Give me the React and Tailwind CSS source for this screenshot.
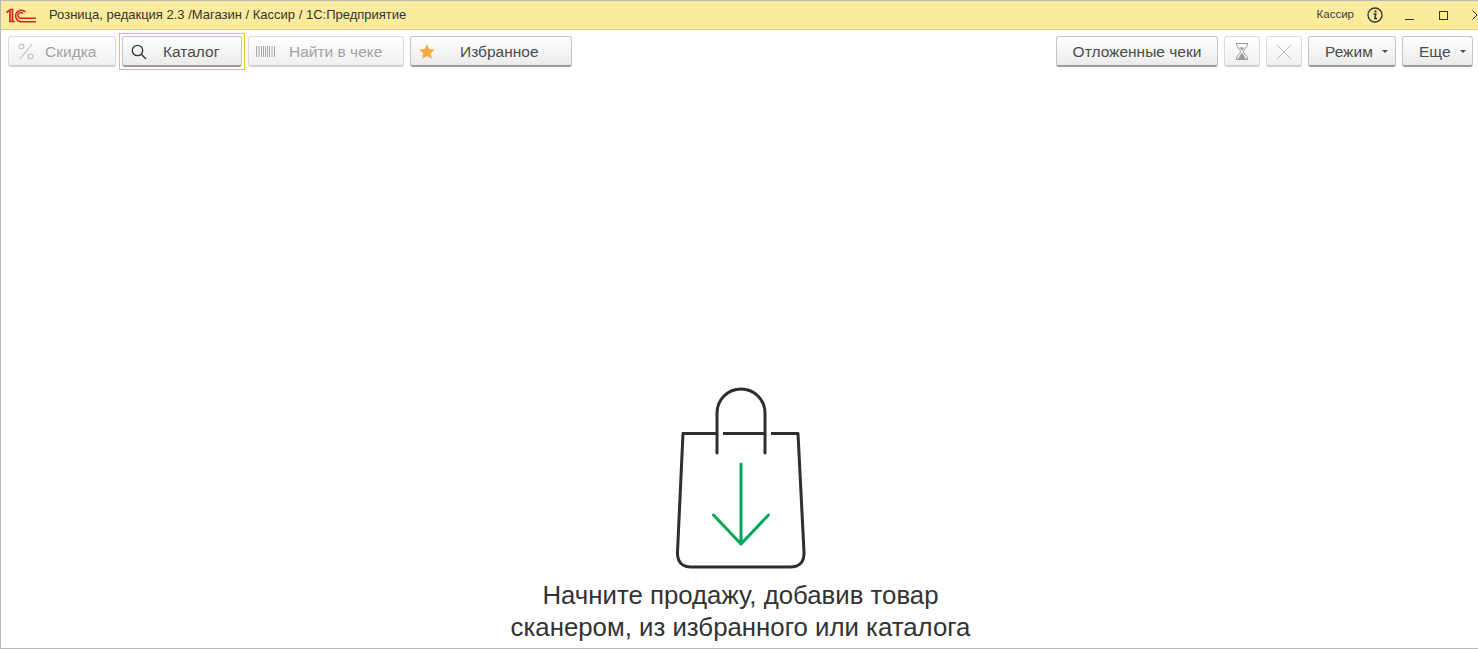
import React from "react";

const base = "h-[31px] flex items-center rounded-[3px] text-[15.500px] leading-none whitespace-nowrap pt-[1px]";
const on = "bg-gradient-to-b from-white to-[#ebebeb] border border-[#c4c4c4] border-b-[#9c9c9c] border-b-2 text-[#4b4b4b]";
const off = "bg-gradient-to-b from-white to-[#f0f0f0] border border-[#dcdcdc] border-b-[#cfcfcf] border-b-2 text-[#a2a2a2]";

function Btn({ w, disabled, children, className = "" }) {
  return <div className={`${base} ${disabled ? off : on} ${w} ${className}`}>{children}</div>;
}

function Caret() {
  return <svg width="6" height="3" viewBox="0 0 6 3" className="shrink-0"><path d="M0 0h6L3 3z" fill="#4b4b4b" /></svg>;
}

export default function App() {
  return (
    <div className="h-[649px] w-[1478px] flex flex-col overflow-hidden bg-white border border-[#b9b9b9] border-r-0 font-['Liberation_Sans',Arial,sans-serif]">
      <header className="h-[29px] shrink-0 flex items-center bg-[#fbec9d] border-b border-[#d9cc7c]">
        <svg width="30" height="15" viewBox="0 0 30 15" className="ml-[5px] shrink-0" fill="none" stroke="#d5231e">
          <path d="M0.500 4.500 L4.500 1.500 H6.500 V14 M3 13.500 H9 M4 3v11" strokeWidth="1.700" />
          <path d="M19.500 4 A5.800 5.800 0 1 0 15 13.800 H30" strokeWidth="1.500" />
          <path d="M17 5.500 A2.900 2.900 0 1 0 15 10.300 H30" strokeWidth="1.500" />
        </svg>
        <span className="ml-[13px] text-[13px] text-[#333] whitespace-nowrap">Розница, редакция 2.3 /Магазин / Кассир / 1С:Предприятие</span>
        <span className="ml-auto text-[11.500px] text-[#3e3e3e] whitespace-nowrap">Кассир</span>
        <svg width="16" height="16" viewBox="0 0 16 16" className="ml-[13px] shrink-0" fill="none" stroke="#333">
          <circle cx="8" cy="8" r="7" strokeWidth="1.300" />
          <circle cx="8.500" cy="4.400" r="1.100" fill="#333" stroke="none" />
          <path d="M6.500 7h2.300l-1 4.400H10" strokeWidth="1.500" />
        </svg>
        <svg width="10" height="10" viewBox="0 0 10 10" className="ml-[22px] shrink-0"><path d="M0 9.500h9" stroke="#333" strokeWidth="1" /></svg>
        <svg width="9" height="9" viewBox="0 0 9 9" className="ml-[24px] shrink-0" fill="none"><rect x="0.500" y="0.500" width="8" height="8" stroke="#333" /></svg>
        <svg width="6" height="10" viewBox="0 0 6 10" className="ml-[24px] shrink-0" fill="none"><path d="M0.500 0.500L5 5L0.500 9.500" stroke="#333" /></svg>
      </header>

      <div className="h-[40px] shrink-0 flex items-start pt-[6px] pl-[7px] pr-[4px] gap-[6px]">
        <Btn w="w-[108px]" disabled className="pl-[9px]">
          <svg width="16" height="17" viewBox="0 0 16 17" fill="none" stroke="#a9b3b3" strokeWidth="1" className="shrink-0">
            <circle cx="3.500" cy="3.500" r="2.500" /><circle cx="12.500" cy="13.500" r="2.500" /><path d="M14 1L2 16" />
          </svg>
          <span className="ml-[11px]">Скидка</span>
        </Btn>
        <div className="-my-[3px] -mx-[3px] p-[2px] border border-[#f2c81e]">
          <Btn w="w-[120px]" className="pl-[8px]">
            <svg width="16" height="16" viewBox="0 0 16 16" fill="none" stroke="#333" strokeWidth="1.300" className="shrink-0">
              <circle cx="6.500" cy="6.500" r="5.200" /><path d="M10.300 10.300L15 15" />
            </svg>
            <span className="ml-[16px]">Каталог</span>
          </Btn>
        </div>
        <Btn w="w-[156px]" disabled className="pl-[7px]">
          <svg width="20" height="13" viewBox="0 0 20 13" fill="none" stroke="#a8a8a8" className="shrink-0">
            <path d="M.5 1v11M3 1v11M5.500 1v11M7.500 1v11M9.500 1v11M11.500 1v11M13.500 1v11M16 1v11M18.500 1v11" />
          </svg>
          <span className="ml-[13px]">Найти в чеке</span>
        </Btn>
        <Btn w="w-[162px]" className="pl-[8px]">
          <svg width="16" height="15" viewBox="0 0 16 15" className="shrink-0"><path d="M8 0l2.300 5 5.400.6-4 3.700 1.100 5.400L8 12l-4.800 2.700 1.100-5.400-4-3.700L5.700 5z" fill="#fbab45" /></svg>
          <span className="ml-[25px]">Избранное</span>
        </Btn>

        <Btn w="w-[162px]" className="ml-auto justify-center">Отложенные чеки</Btn>
        <Btn w="w-[36px]" disabled className="justify-center">
          <svg width="14" height="17" viewBox="0 0 14 17" fill="none" stroke="#9a9a9a" className="shrink-0">
            <path d="M1 .5h12M1 16.500h12M1.500 1c0 3.500 4 5 4 7.500S1.500 12.500 1.500 16M12.500 1c0 3.500-4 5-4 7.500s4 4 4 7.500" />
            <path d="M7 9.500L3 16h8zM4.500 4.500h5L7 7.500z" fill="#9a9a9a" stroke="none" />
          </svg>
        </Btn>
        <Btn w="w-[36px]" disabled className="justify-center">
          <svg width="16" height="16" viewBox="0 0 16 16" fill="none" stroke="#cdb9b9" className="shrink-0"><path d="M1 1l14 14M15 1L1 15" /></svg>
        </Btn>
        <Btn w="w-[88px]" className="pl-[16px]">
          <span>Режим</span><span className="ml-[9px] flex"><Caret /></span>
        </Btn>
        <Btn w="w-[71px]" className="pl-[16px] mr-[1px]">
          <span>Еще</span><span className="ml-[9px] flex"><Caret /></span>
        </Btn>
      </div>

      <main className="flex-1 flex flex-col items-center justify-end min-h-0 pb-[5px] pl-[2px]">
        <svg width="132" height="183" viewBox="675 387 132 183" fill="none" strokeLinecap="round" strokeLinejoin="round" className="shrink-0">
          <g stroke="#2e2e2e" strokeWidth="3">
            <path d="M717 453V413a24 24 0 0 1 48 0V453" />
            <path d="M716 433.500H683L677.500 552q-.5 15 14 15H790q14.500 0 14-15L798 433.500H771" strokeLinecap="butt" />
            <path d="M723 433.500H764" strokeLinecap="butt" />
          </g>
          <path d="M741 464V544M713.500 515L741 544L768.500 515" stroke="#00a55a" strokeWidth="3" />
        </svg>
        <p className="mt-[9px] text-[25.800px] leading-[32px] text-[#333] text-center">Начните продажу, добавив товар<br />сканером, из избранного или каталога</p>
      </main>
    </div>
  );
}
